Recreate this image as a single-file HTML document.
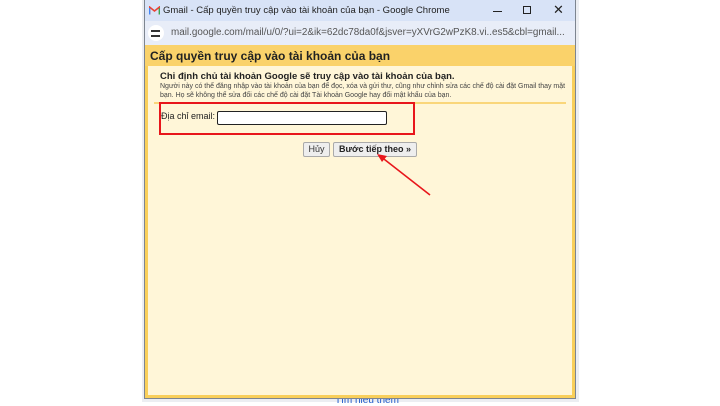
<!DOCTYPE html>
<html><head><meta charset="utf-8"><style>
*{margin:0;padding:0;box-sizing:border-box}
body{width:720px;height:405px;background:#fff;position:relative;overflow:hidden;font-family:"Liberation Sans",Arial,sans-serif}
.a{position:absolute}
</style></head><body>
<div class="a" style="left:142px;top:0;width:437px;height:402px;background:#eceef2"></div>
<div class="a" style="left:335px;top:395px;font-size:10px;color:#1a57c9">Tìm hiểu thêm</div>
<div class="a" style="left:144px;top:0;width:432px;height:399px;background:#7d8590"></div>
<!-- title bar -->
<div class="a" style="left:145px;top:0;width:430px;height:21px;background:#d8e3f7"></div>
<svg class="a" style="left:149px;top:6px" width="11" height="9" viewBox="0 0 11 9"><path d="M0.5 8.5V1L5.5 5 10.5 1V8.5" fill="none" stroke="#ea4335" stroke-width="1.6"/><path d="M0.5 8.5V2" stroke="#4285f4" stroke-width="1.6"/><path d="M10.5 8.5V2" stroke="#34a853" stroke-width="1.6"/></svg>
<div class="a" style="left:163px;top:5px;font-size:9.5px;color:#222">Gmail - Cấp quyền truy cập vào tài khoản của bạn - Google Chrome</div>
<div class="a" style="left:493px;top:11px;width:9px;height:1px;background:#222"></div>
<div class="a" style="left:523px;top:6px;width:8px;height:8px;border:1px solid #222"></div>
<div class="a" style="left:553px;top:2px;font-size:13px;color:#222">✕</div>
<!-- address bar -->
<div class="a" style="left:145px;top:21px;width:430px;height:24px;background:#e8edf8"></div>
<div class="a" style="left:148px;top:25px;width:16px;height:16px;border-radius:8px;background:#fff"></div>
<div class="a" style="left:151px;top:30px;width:9px;height:1.5px;background:#333"></div>
<div class="a" style="left:151px;top:35px;width:9px;height:1.5px;background:#333"></div>
<div class="a" style="left:171px;top:27px;font-size:9.9px;color:#555;white-space:nowrap">mail.google.com/mail/u/0/?ui=2&amp;ik=62dc78da0f&amp;jsver=yXVrG2wPzK8.vi..es5&amp;cbl=gmail...</div>
<!-- dialog -->
<div class="a" style="left:145px;top:45px;width:430px;height:353px;background:#f9cf5a"></div>
<div class="a" style="left:145px;top:45px;width:430px;height:21px;background:#fad26a"></div>
<div class="a" style="left:150px;top:49px;font-size:12px;font-weight:bold;color:#222">Cấp quyền truy cập vào tài khoản của bạn</div>
<div class="a" style="left:148px;top:66px;width:424px;height:329px;background:#fff6d8"></div>
<div class="a" style="left:160px;top:71px;font-size:9.5px;font-weight:bold;color:#222">Chỉ định chủ tài khoản Google sẽ truy cập vào tài khoản của bạn.</div>
<div class="a" style="left:160px;top:82px;width:408px;font-size:7px;line-height:9px;color:#444">Người này có thể đăng nhập vào tài khoản của bạn để đọc, xóa và gửi thư, cũng như chỉnh sửa các chế độ cài đặt Gmail thay mặt bạn. Họ sẽ không thể sửa đổi các chế độ cài đặt Tài khoản Google hay đổi mật khẩu của bạn.</div>
<div class="a" style="left:154px;top:102px;width:412px;height:2px;background:#fad67a"></div>
<div class="a" style="left:159px;top:102px;width:256px;height:33px;border:2px solid #e8161b"></div>
<div class="a" style="left:161px;top:111px;font-size:9px;color:#222">Địa chỉ email:</div>
<div class="a" style="left:217px;top:111px;width:170px;height:14px;border:1.5px solid #222;border-radius:2px;background:#fff"></div>
<div class="a" style="left:303px;top:142px;width:27px;height:15px;border:1px solid #aaa;border-radius:2px;background:#eee;font-size:9px;color:#333;text-align:center;line-height:13px">Hủy</div>
<div class="a" style="left:333px;top:142px;width:84px;height:15px;border:1px solid #aaa;border-radius:2px;background:#eee;font-size:9px;font-weight:bold;color:#222;text-align:center;line-height:13px">Bước tiếp theo »</div>
<svg class="a" style="left:370px;top:150px" width="65" height="50"><line x1="60" y1="45" x2="10" y2="6" stroke="#e8161b" stroke-width="1.6"/><path d="M7 4 L17 6 L12 12 Z" fill="#e8161b"/></svg>
</body></html>
